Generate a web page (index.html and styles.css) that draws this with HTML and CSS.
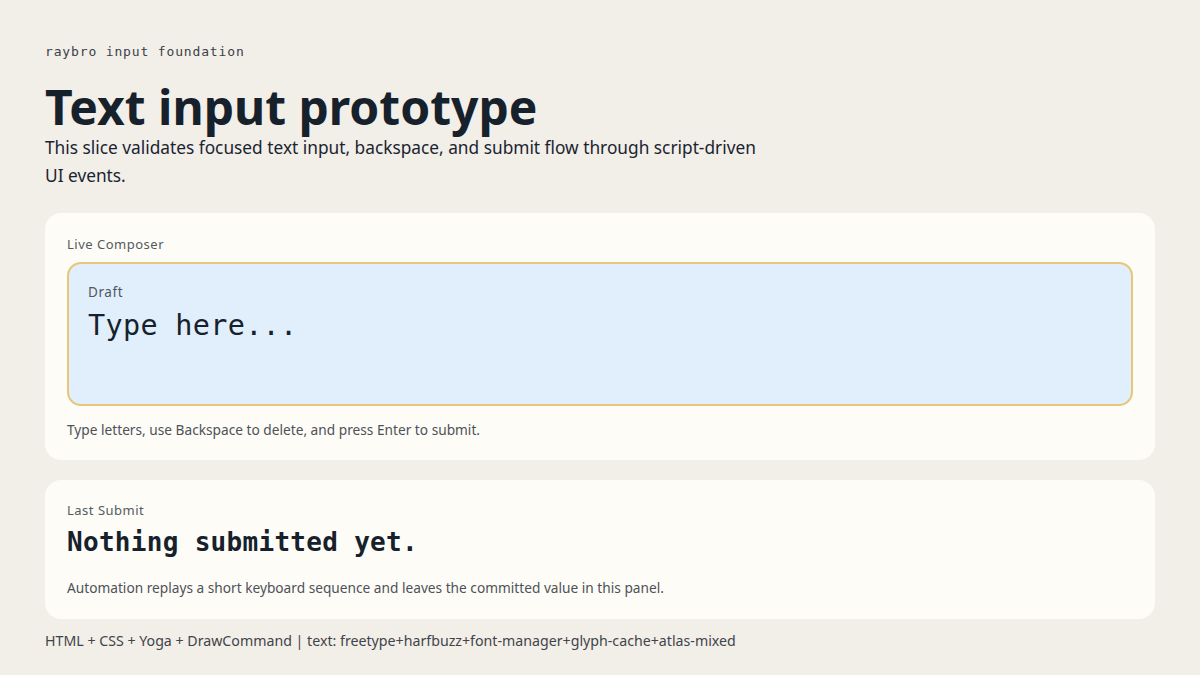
FILE: index.html
```html
<!DOCTYPE html>
<html lang="en">
<head>
<meta charset="utf-8">
<title>Text input prototype</title>
<link rel="stylesheet" href="styles.css">
</head>
<body>
<main class="page">
  <header class="intro">
    <div class="eyebrow">raybro input foundation</div>
    <h1 class="title">Text input prototype</h1>
    <p class="lede">This slice validates focused text input, backspace, and submit flow through script-driven UI events.</p>
  </header>
  <section class="card composer">
    <div class="card-label">Live Composer</div>
    <div class="field">
      <div class="field-label">Draft</div>
      <div class="field-value">Type here...</div>
    </div>
    <p class="hint">Type letters, use Backspace to delete, and press Enter to submit.</p>
  </section>
  <section class="card result">
    <div class="card-label">Last Submit</div>
    <div class="result-value">Nothing submitted yet.</div>
    <p class="hint">Automation replays a short keyboard sequence and leaves the committed value in this panel.</p>
  </section>
  <footer class="footer">HTML + CSS + Yoga + DrawCommand | text: freetype+harfbuzz+font-manager+glyph-cache+atlas-mixed</footer>
</main>
</body>
</html>
```

FILE: styles.css
```css
* { box-sizing: border-box; }
html, body { margin: 0; padding: 0; }
body {
  background: #f2eee8;
  color: #1a2430;
  font-family: "Noto Sans", "Open Sans", sans-serif;
  width: 1200px;
  height: 675px;
  overflow: hidden;
}
.page {
  padding: 43px 45px 0 45px;
  display: flex;
  flex-direction: column;
}
.intro { display: flex; flex-direction: column; }
.eyebrow {
  font-family: "DejaVu Sans Mono", monospace;
  font-size: 13px;
  letter-spacing: 0.85px;
  color: #3b4148;
  line-height: 18px;
}
.title {
  margin: 22px 0 0 0;
  font-size: 48px;
  font-weight: 700;
  line-height: 48px;
  letter-spacing: 0;
  color: #17212b;
}
.lede {
  margin: 3px 0 0 0;
  max-width: 725px;
  font-size: 17.3px;
  line-height: 28px;
  color: #1a2430;
}
.card {
  background: #fdfcf7;
  border-radius: 16px;
  padding: 22px 22px 20px 22px;
  display: flex;
  flex-direction: column;
}
.composer { margin-top: 23px; }
.result { margin-top: 20px; padding-top: 21px; padding-bottom: 21px; }
.card-label {
  font-size: 13px;
  letter-spacing: 0.5px;
  color: #555a5f;
  line-height: 18px;
}
.field {
  margin-top: 9px;
  height: 144px;
  background: #e1eefb;
  border: 2px solid #e6c779;
  border-radius: 14px;
  padding: 18px 19px 17px 19px;
}
.field-label {
  font-size: 13.5px;
  color: #4e5862;
  letter-spacing: 0.6px;
  line-height: 20px;
}
.field-value {
  margin-top: 6px;
  font-family: "DejaVu Sans Mono", monospace;
  font-size: 28.5px;
  line-height: 36px;
  letter-spacing: 0.3px;
  color: #17212b;
}
.hint {
  margin: 14px 0 0 0;
  font-size: 13.7px;
  line-height: 20px;
  color: #4e5257;
}
.result-value {
  margin-top: 6px;
  font-family: "DejaVu Sans Mono", monospace;
  font-weight: 700;
  font-size: 26px;
  line-height: 34px;
  letter-spacing: 0.3px;
  color: #17212b;
}
.result .hint { margin-top: 19px; }
.footer {
  margin-top: 12px;
  font-size: 14.2px;
  line-height: 20px;
  color: #3f444a;
}
```
